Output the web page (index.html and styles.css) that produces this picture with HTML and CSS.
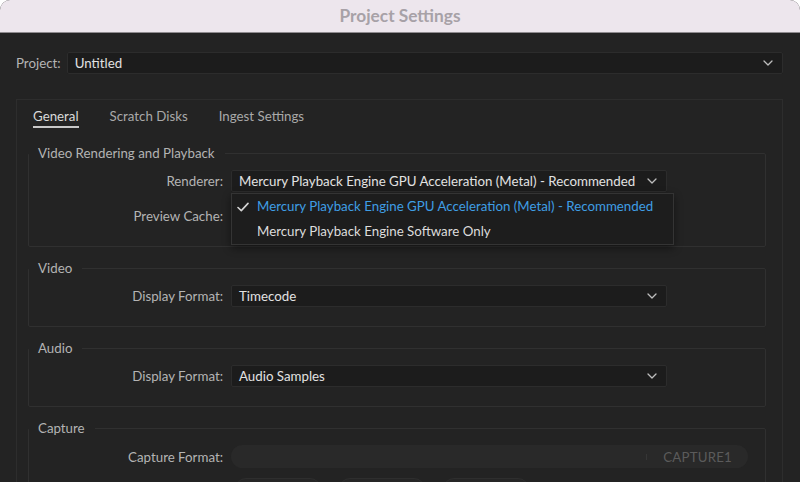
FILE: index.html
```html
<!DOCTYPE html>
<html lang="en">
<head>
<meta charset="utf-8">
<title>Project Settings</title>
<link rel="stylesheet" href="styles.css">
</head>
<body>
<div class="window">
  <header class="titlebar">Project Settings</header>

  <div class="content">
    <div class="project-row">
      <span class="label">Project:</span>
      <div class="select select-wide">
        <span class="select-value">Untitled</span>
        <svg class="chevron" width="10" height="6" viewBox="0 0 10 6"><polyline points="1,1 5,5 9,1"/></svg>
      </div>
    </div>

    <section class="panel">
      <nav class="tabs">
        <span class="tab active">General</span>
        <span class="tab">Scratch Disks</span>
        <span class="tab">Ingest Settings</span>
      </nav>

      <fieldset class="group">
        <legend>Video Rendering and Playback</legend>
        <div class="rows">
          <span class="label">Renderer:</span>
          <div class="select-wrap">
            <div class="select">
              <span class="select-value">Mercury Playback Engine GPU Acceleration (Metal) - Recommended</span>
              <svg class="chevron" width="10" height="6" viewBox="0 0 10 6"><polyline points="1,1 5,5 9,1"/></svg>
            </div>
            <ul class="menu">
              <li class="menu-item selected">
                <svg class="check" width="12" height="10" viewBox="0 0 12 10"><polyline points="1,5.5 4.3,8.6 11,1.4"/></svg>
                Mercury Playback Engine GPU Acceleration (Metal) - Recommended
              </li>
              <li class="menu-item">Mercury Playback Engine Software Only</li>
            </ul>
          </div>
          <span class="label">Preview Cache:</span>
          <div class="select-placeholder"></div>
        </div>
      </fieldset>

      <fieldset class="group">
        <legend>Video</legend>
        <div class="rows">
          <span class="label">Display Format:</span>
          <div class="select">
            <span class="select-value">Timecode</span>
            <svg class="chevron" width="10" height="6" viewBox="0 0 10 6"><polyline points="1,1 5,5 9,1"/></svg>
          </div>
        </div>
      </fieldset>

      <fieldset class="group">
        <legend>Audio</legend>
        <div class="rows">
          <span class="label">Display Format:</span>
          <div class="select">
            <span class="select-value">Audio Samples</span>
            <svg class="chevron" width="10" height="6" viewBox="0 0 10 6"><polyline points="1,1 5,5 9,1"/></svg>
          </div>
        </div>
      </fieldset>

      <fieldset class="group">
        <legend>Capture</legend>
        <div class="rows rows-capture">
          <span class="label">Capture Format:</span>
          <div class="pill-field">
            <span class="divider"></span>
            <span class="pill-value">CAPTURE1</span>
          </div>
          <span></span>
          <div class="buttons">
            <span class="btn"></span>
            <span class="btn"></span>
            <span class="btn"></span>
          </div>
        </div>
      </fieldset>
    </section>
  </div>
</div>
</body>
</html>
```

FILE: styles.css
```css
* {
  box-sizing: border-box;
}

html,
body {
  margin: 0;
  height: 100%;
  background: #ffffff;
  overflow: hidden;
}

body {
  font-family: "Lato", "Liberation Sans", sans-serif;
  font-size: 13.3px;
  color: #b6b6b6;
}

.window {
  height: 100%;
  background: #232323;
  border-radius: 10px 10px 0 0;
  overflow: hidden;
}

.titlebar {
  height: 33px;
  background: #ede6ed;
  border-bottom: 1px solid #8f8b8f;
  color: #a7a1a7;
  font-weight: 700;
  font-size: 17.3px;
  line-height: 32px;
  text-align: center;
}

.content {
  padding: 19px 17px 0 16px;
}

.project-row {
  display: flex;
  align-items: center;
  gap: 6px;
}

.label {
  color: #b4b4b4;
  line-height: 16px;
}

.select {
  display: flex;
  align-items: center;
  justify-content: space-between;
  height: 22px;
  padding: 0 9px 0 7px;
  background: #1c1c1c;
  border: 1px solid #2c2c2c;
  border-radius: 2px;
  color: #e2e2e2;
}

.select-wide {
  flex: 1;
}

.select-value {
  line-height: 16px;
  white-space: nowrap;
}

.chevron {
  fill: none;
  stroke: #bdbdbd;
  stroke-width: 1.3;
  stroke-linecap: round;
  stroke-linejoin: round;
}

.panel {
  margin-top: 25px;
  border: 1px solid #2d2d2d;
  border-bottom: none;
  padding: 0 16px 0 11px;
  height: 400px;
}

.tabs {
  display: flex;
  gap: 31px;
  padding-left: 5px;
}

.tab {
  padding-top: 8px;
  padding-bottom: 2px;
  line-height: 16px;
  border-bottom: 2px solid transparent;
  color: #a9a9a9;
}

.tab.active {
  color: #dadada;
  border-bottom-color: #c8c8c8;
}

.group {
  margin: 13px 0 0;
  padding: 9px 0 19px;
  border: 1px solid #303030;
  border-radius: 2px;
  min-width: 0;
}

.tabs + .group {
  margin-top: 17px;
}

.group legend {
  padding: 0 10px 0 9px;
  line-height: 16px;
  color: #b3b3b3;
}

.rows {
  display: grid;
  grid-template-columns: 194px 436px;
  column-gap: 8px;
  row-gap: 13px;
  align-items: center;
}

.rows .label {
  text-align: right;
}

.rows-capture {
  grid-template-columns: 194px 517px;
  row-gap: 10px;
}

.select-wrap {
  position: relative;
}

.select-placeholder {
  height: 22px;
}

/* open dropdown list of the renderer select */
.menu {
  position: absolute;
  top: 23px;
  left: 0;
  width: 443px;
  margin: 0;
  padding: 0;
  list-style: none;
  background: #1d1d1d;
  border: 1px solid #343434;
  box-shadow: 0 3px 8px rgba(0, 0, 0, 0.45);
  z-index: 2;
}

.menu-item {
  position: relative;
  height: 25px;
  line-height: 25px;
  padding-left: 25px;
  color: #dcdcdc;
  white-space: nowrap;
}

.menu-item.selected {
  color: #3f9ee4;
}

.check {
  position: absolute;
  left: 5px;
  top: 8px;
  fill: none;
  stroke: #d4d4d4;
  stroke-width: 1.6;
  stroke-linecap: round;
  stroke-linejoin: round;
}

.pill-field {
  display: flex;
  align-items: center;
  justify-content: flex-end;
  height: 23px;
  padding-right: 16px;
  background: #292929;
  border-radius: 12px;
}

.divider {
  width: 1px;
  height: 6px;
  background: #363636;
  margin-right: 16px;
}

.pill-value {
  color: #5b5b5b;
  letter-spacing: 0.2px;
  line-height: 16px;
}

.buttons {
  display: flex;
  gap: 18px;
  padding-left: 4px;
}

.btn {
  width: 86px;
  height: 22px;
  background: #262626;
  border: 1px solid #2e2e2e;
  border-radius: 11px;
}
```
